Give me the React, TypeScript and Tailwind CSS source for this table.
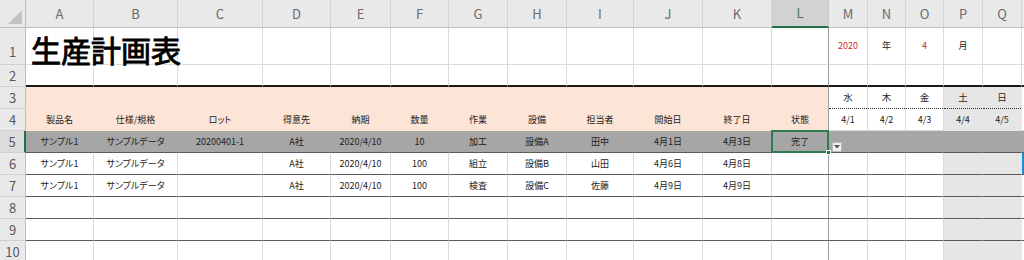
import React from 'react';

const COLS = ['A', 'B', 'C', 'D', 'E', 'F', 'G', 'H', 'I', 'J', 'K', 'L', 'M', 'N', 'O', 'P', 'Q', ''];

// 行ごとのセル値 (A〜R)
const DATA: Record<number, string[]> = {
  1: ['生産計画表', '', '', '', '', '', '', '', '', '', '', '', '2020', '年', '4', '月', '', ''],
  2: [],
  3: ['', '', '', '', '', '', '', '', '', '', '', '', '水', '木', '金', '土', '日', ''],
  4: ['製品名', '仕様/規格', 'ロット', '得意先', '納期', '数量', '作業', '設備', '担当者', '開始日', '終了日', '状態', '4/1', '4/2', '4/3', '4/4', '4/5', ''],
  5: ['サンプル1', 'サンプルデータ', '20200401-1', 'A社', '2020/4/10', '10', '加工', '設備A', '田中', '4月1日', '4月3日', '完了', '', '', '', '', '', ''],
  6: ['サンプル1', 'サンプルデータ', '', 'A社', '2020/4/10', '100', '組立', '設備B', '山田', '4月6日', '4月8日', '', '', '', '', '', '', ''],
  7: ['サンプル1', 'サンプルデータ', '', 'A社', '2020/4/10', '100', '検査', '設備C', '佐藤', '4月9日', '4月9日', '', '', '', '', '', '', ''],
  8: [],
  9: [],
  10: [],
};

const SELECTED_COL = 11; // L
const SELECTED_ROW = 5;

function cellClass(r: number, c: number) {
  const cls = ['relative flex items-center justify-center whitespace-nowrap border-r'];
  const weekend = c === 15 || c === 16;

  // 塗りつぶし（塗った所は枠線が消える）
  if (r === 5) cls.push('bg-[#a6a6a6] border-[#a6a6a6]');
  else if ((r === 3 || r === 4) && c <= 11) cls.push('bg-[#fce4d6] border-[#fce4d6]');
  else if (weekend && r >= 3) cls.push('bg-[#e7e6e6] border-[#e7e6e6]');
  else if (c === 17 && r === 6) cls.push('bg-[#1a8fd8] border-[#1a8fd8]');
  else cls.push('border-[#dadada]');

  // 横罫線
  if (r === 2) cls.push('border-b-2 border-b-[#1a1a1a]');
  else if (r === 3 && c >= 12) cls.push('border-b-0');
  else if (r >= 5 && r <= 9) cls.push('border-b border-b-[#5a5a5a]');
  else cls.push('border-b');

  if (c === 11) cls.push('border-r-[#9c9c9c]');
  if (r === SELECTED_ROW && c === SELECTED_COL) cls.push('z-10');
  if (r === 1 && c === 0) cls.push('z-10 !justify-start pl-[5px] pt-[5px]');
  return cls.join(' ');
}

function ColHeader({ label, index }: { label: string; index: number }) {
  const selected = index === SELECTED_COL;
  return (
    <div
      className={
        selected
          ? 'flex items-center justify-center border-r border-r-[#c8c8c8] border-b-2 border-b-[#217346] bg-[#d2d2d2] text-[13px] text-[#4a7359]'
          : 'flex items-center justify-center border-r border-r-[#d3d3d3] border-b border-b-[#bdbdbd] bg-[#e9e9e9] text-[13px] text-[#6b6b6b]'
      }
    >
      {label}
    </div>
  );
}

function RowHeader({ r }: { r: number }) {
  const selected = r === SELECTED_ROW;
  return (
    <div
      className={
        (r === 1 ? 'items-end pb-[3px] ' : 'items-center ') +
        (selected
          ? 'flex justify-center border-r-2 border-r-[#217346] border-b border-b-[#d0d0d0] bg-[#dcdcdc] text-[13px] text-[#5a5a5a]'
          : 'flex justify-center border-r border-r-[#bdbdbd] border-b border-b-[#d0d0d0] bg-[#e9e9e9] text-[13px] text-[#5a5a5a]')
      }
    >
      {r}
    </div>
  );
}

function DayCell({ text, weekend }: { text: string; weekend: boolean }) {
  return (
    <div className={weekend ? 'flex flex-col border-r border-[#e7e6e6] bg-[#e7e6e6]' : 'flex flex-col border-r border-[#dadada]'}>
      <span className="flex flex-1 items-center justify-center text-[9.5px] text-[#1f1f1f]">{text}</span>
      <div className="border-t border-dotted border-[#333]" />
    </div>
  );
}

function BodyCell({ r, c }: { r: number; c: number }) {
  const value = DATA[r][c] ?? '';

  if (r === 3 && c >= 12 && c <= 16) return <DayCell text={value} weekend={c >= 15} />;

  if (r === 1 && c === 0) {
    return (
      <div className={cellClass(r, c)}>
        <span className="text-[30px] leading-none text-black [-webkit-text-stroke:0.9px_black] [font-feature-settings:normal]">{value}</span>
      </div>
    );
  }

  const red = r === 1 && (c === 12 || c === 14);
  return (
    <div className={cellClass(r, c)}>
      <span className={red ? 'text-[9px] text-[#d02a2a]' : 'text-[9px] text-[#222]'}>{value}</span>
      {r === SELECTED_ROW && c === SELECTED_COL && (
        <>
          {/* アクティブセルの枠とフィルハンドル */}
          <div className="absolute -left-px -top-px -right-px -bottom-px border-2 border-[#2f7a4e]" />
          <div className="absolute -right-[3px] -bottom-[3px] h-[5px] w-[5px] border border-white bg-[#217346]" />
          {/* 入力規則のドロップダウン */}
          <div className="absolute left-[60px] top-[11px] flex h-[10px] w-[10px] items-center justify-center border border-[#b8b8b8] bg-[#efefef]">
            <svg width="6" height="4" viewBox="0 0 6 4">
              <path d="M0 0h6L3 3.5z" fill="#555" />
            </svg>
          </div>
        </>
      )}
    </div>
  );
}

export default function App() {
  const rowNums = [1, 2, 3, 4, 5, 6, 7, 8, 9, 10];

  return (
    <div className="h-[260px] w-[1024px] overflow-hidden bg-white font-['Noto_Sans_CJK_JP',sans-serif] [font-feature-settings:'palt']">
      <div className="grid grid-cols-[26px_68px_84px_85px_68px_60px_58px_59px_59px_67px_69px_69px_57px_39px_38px_38px_39px_39px_10px] grid-rows-[28px_37px_22px_22px_22px_22px_22px_22px_22px_22px_22px]">
        {/* 左上の全選択ボタン */}
        <div className="flex items-end justify-end border-r border-r-[#bdbdbd] border-b border-b-[#bdbdbd] bg-[#e9e9e9] p-[3px]">
          <svg width="14" height="14" viewBox="0 0 14 14">
            <path d="M14 0V14H0z" fill="#c3c3c3" />
          </svg>
        </div>
        {COLS.map((label, i) => (
          <ColHeader key={'h' + i} label={label} index={i} />
        ))}

        {rowNums.map((r) => (
          <React.Fragment key={r}>
            <RowHeader r={r} />
            {COLS.map((_, c) => (
              <BodyCell key={r + '-' + c} r={r} c={c} />
            ))}
          </React.Fragment>
        ))}
      </div>
    </div>
  );
}
